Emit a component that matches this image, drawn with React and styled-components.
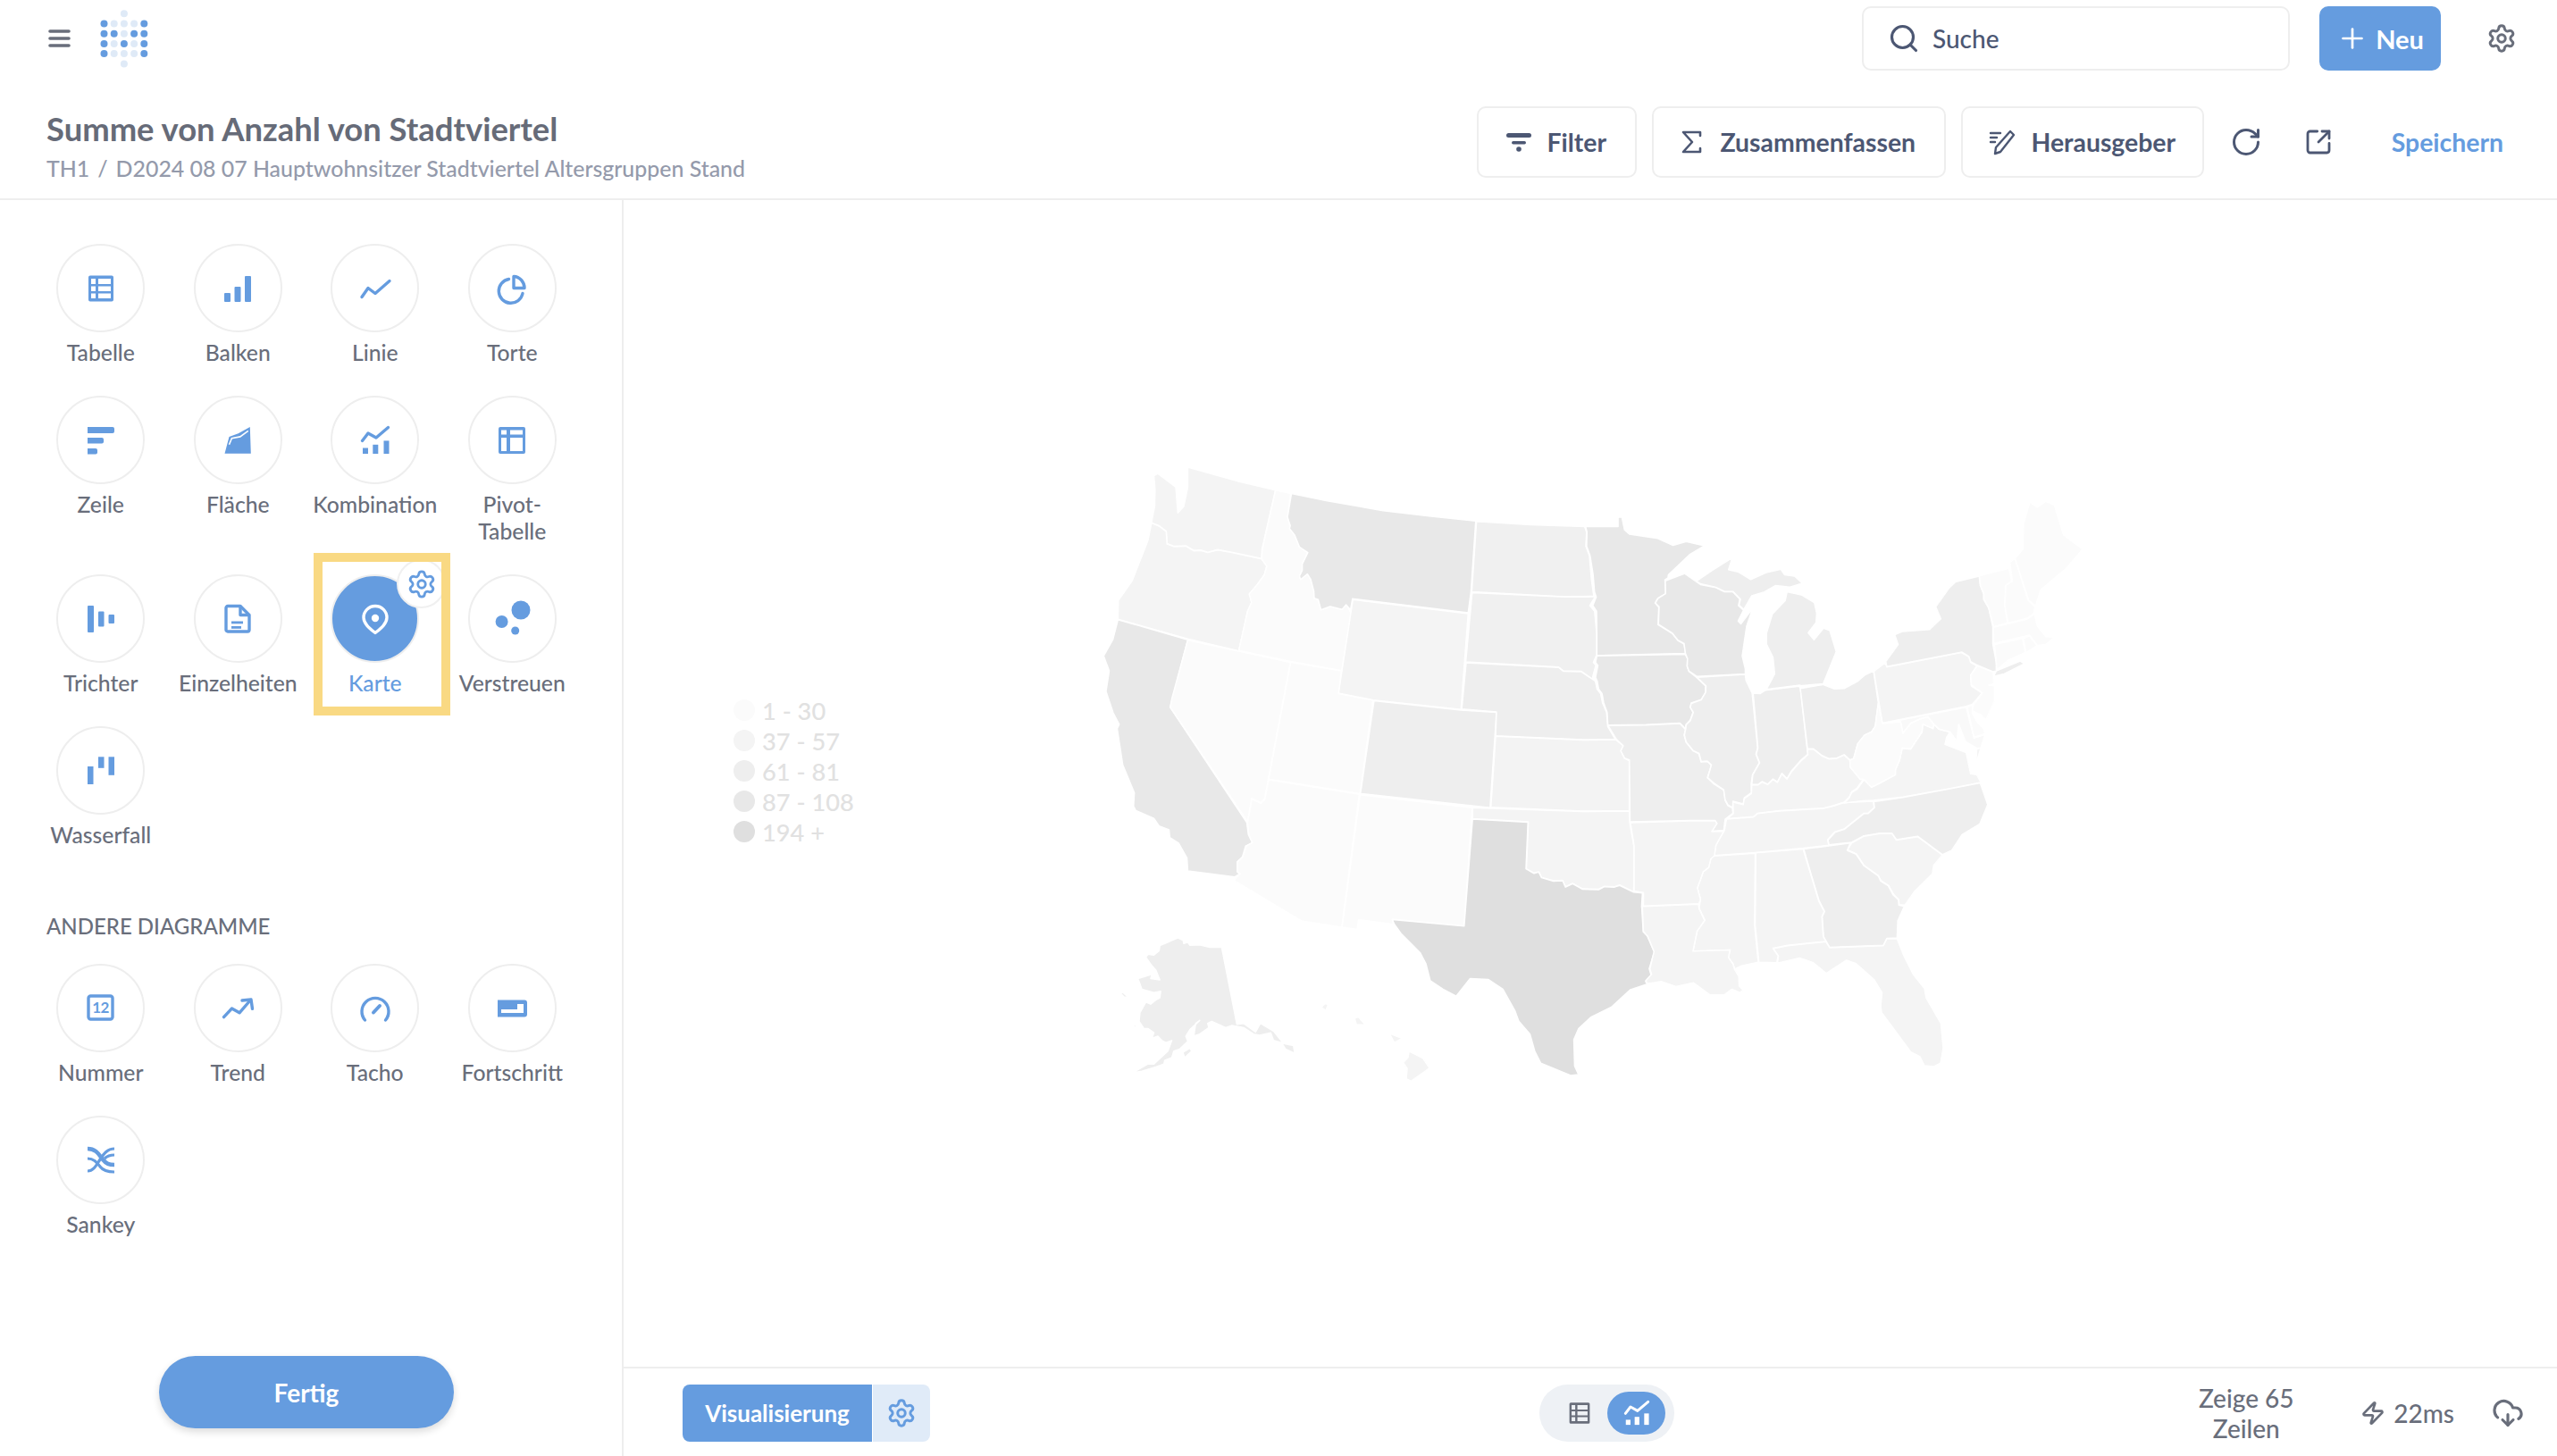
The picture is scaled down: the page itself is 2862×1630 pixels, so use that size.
import React from 'react';
import styled, { createGlobalStyle } from 'styled-components';
import { Search, Plus, Settings, RotateCw, SquareArrowOutUpRight, Zap, CloudDownload } from 'lucide-react';

const BLUE = '#659CDF';
const DARK = '#4C5773';
const LABEL = '#696E7B';

const Global = createGlobalStyle`
  html, body { margin: 0; padding: 0; background: #fff; }
  body { font-family: Lato, "Liberation Sans", sans-serif; }
  * { box-sizing: border-box; }
`;

const Page = styled.div`
  width: 2862px; height: 1630px; display: flex; flex-direction: column; overflow: hidden; background: #fff;
`;
const TopBar = styled.header`
  height: 86px; display: flex; align-items: center; padding: 0 38px 0 54px; flex: none;
`;
const Burger = styled.svg`width: 25px; height: 20px; color: ${LABEL};`;
const Logo = styled.svg`width: 54px; height: 66px; margin: 2px 0 0 33px;`;
const TopRight = styled.div`margin-left: auto; display: flex; align-items: center;`;
const SearchBox = styled.div`
  width: 479px; height: 72px; border: 2px solid #EEEEEE; border-radius: 10px; display: flex; align-items: center;
  padding-left: 27px; gap: 14px; color: ${DARK}; font-size: 28px; font-weight: 500;
`;
const NewButton = styled.button`
  width: 136px; height: 72px; margin-left: 33px; border: 0; border-radius: 10px; background: ${BLUE}; color: #fff;
  font: 700 29px Lato, sans-serif; display: flex; align-items: center; justify-content: center; gap: 8px; padding: 0;
`;
const GearHolder = styled.div`margin-left: 51px; margin-right: 7px; display: flex; color: ${LABEL};`;

const TitleBar = styled.div`
  height: 138px; flex: none; display: flex; align-items: flex-start; padding: 33px 60px 0 52px; border-bottom: 2px solid #EEEEEE;
`;
const TitleBlock = styled.div`margin-top: 2px;`;
const Title = styled.h1`margin: 0; font-size: 36.4px; line-height: 46px; font-weight: 700; color: #666B78; white-space: nowrap;`;
const Crumbs = styled.div`display: flex; gap: 9px; font-size: 24.9px; line-height: 38px; margin-top: 2px; color: #949AAB; font-weight: 500; white-space: nowrap;`;
const Actions = styled.div`margin-left: auto; display: flex; align-items: center; height: 80px;`;
const ActionButton = styled.button`
  height: 80px; margin-right: 17px; border: 2px solid #EEEEEE; border-radius: 10px; background: #fff; color: ${DARK};
  font: 700 28.4px Lato, sans-serif; display: flex; align-items: center; justify-content: center; gap: ${p => p.$gap}px;
  width: ${p => p.$w}px; padding: 0;
`;
const IconSlot = styled.div`display: flex; color: ${DARK}; margin-left: ${p => p.$ml}px;`;
const Save = styled.div`margin-left: 66px; color: ${BLUE}; font-size: 28.4px; font-weight: 700;`;

const Body = styled.div`flex: 1; display: flex; min-height: 0;`;
const Sidebar = styled.aside`
  width: 698px; flex: none; border-right: 2px solid #EEEEEE; padding: 49px 0 31px 36px; display: flex; flex-direction: column;
`;
const ChartGrid = styled.div`display: grid; grid-template-columns: repeat(4, 153.5px); row-gap: 33px;`;
const Item = styled.div`position: relative; display: flex; flex-direction: column; align-items: center;`;
const Circle = styled.div`
  width: 99px; height: 99px; border-radius: 50%; border: 2px solid #EEEEEE;
  background: ${p => (p.$active ? BLUE : '#fff')}; color: ${p => (p.$active ? '#fff' : BLUE)};
  display: flex; align-items: center; justify-content: center;
`;
const Label = styled.div`
  margin-top: 8px; font-size: 24.7px; line-height: 30px; text-align: center; white-space: pre-line;
  color: ${p => (p.$active ? BLUE : LABEL)}; font-weight: 500;
`;
const Badge = styled.div`
  position: absolute; left: 101px; top: -17px; width: 55px; height: 55px; border-radius: 50%; background: #fff;
  border: 2px solid #F0F0F0; color: ${BLUE}; display: flex; align-items: center; justify-content: center;
`;
const Highlight = styled.div`
  position: absolute; left: 8px; top: -24px; width: 153px; height: 182px; border: 10px solid #F9D983; pointer-events: none;
`;
const SectionHead = styled.div`
  margin: 72px 0 27px 16px; font-size: 24px; line-height: 30px; font-weight: 500; color: ${LABEL}; white-space: nowrap;
`;
const Done = styled.button`
  margin: auto 0 0 142px; width: 330px; height: 81px; flex: none; border: 0; border-radius: 41px; background: ${BLUE}; color: #fff;
  font: 700 28px Lato, sans-serif; box-shadow: 0 4px 8px rgba(0,0,0,.14);
`;

const Main = styled.main`flex: 1; min-width: 0; display: flex; flex-direction: column;`;
const Canvas = styled.div`flex: 1; min-height: 0; display: flex; align-items: flex-start;`;
const Legend = styled.div`margin: 554px 0 0 123px; width: 379px; flex: none; display: flex; flex-direction: column;`;
const LegendRow = styled.div`
  height: 34px; display: flex; align-items: center; gap: 8px; font-size: 27.2px; font-weight: 500; color: #E1E1E1; white-space: nowrap;
`;
const LegendDot = styled.span`width: 24px; height: 24px; border-radius: 50%; background: ${p => p.$c}; flex: none;`;
const MapSvg = styled.svg`width: 1200px; height: 750px; margin-top: 276px; flex: none; display: block;`;
const Shape = styled.polygon`fill: ${p => p.$c}; stroke: #fff; stroke-width: 1.5px; stroke-linejoin: round; vector-effect: non-scaling-stroke;`;

const BottomBar = styled.footer`
  height: 100px; flex: none; border-top: 2px solid #EEEEEE; display: flex; align-items: center; padding: 2px 37px 0 66px;
`;
const VizGroup = styled.div`display: flex; height: 64px; gap: 1px; border-radius: 8px; overflow: hidden;`;
const VizButton = styled.div`
  width: 212px; background: ${BLUE}; color: #fff; font-size: 26px; font-weight: 700; display: flex; align-items: center; justify-content: center;
`;
const VizGear = styled.div`width: 64px; background: #E0EBF8; color: ${BLUE}; display: flex; align-items: center; justify-content: center;`;
const Toggle = styled.div`
  margin-left: 682px; width: 151px; height: 64px; border-radius: 32px; background: #EEF1F5; display: flex; align-items: center; padding: 0 10px 0 32px;
  color: ${LABEL};
`;
const ToggleActive = styled.div`
  margin-left: auto; width: 65px; height: 48px; border-radius: 24px; background: ${BLUE}; color: #fff; display: flex; align-items: center; justify-content: center;
`;
const Rows = styled.div`
  margin-left: auto; width: 120px; text-align: center; font-size: 28px; line-height: 34px; font-weight: 500; color: ${LABEL};
`;
const Timing = styled.div`
  margin-left: 68px; display: flex; align-items: center; gap: 9px; font-size: 28px; font-weight: 500; color: ${LABEL};
`;
const Cloud = styled.div`margin-left: 42px; display: flex; color: ${LABEL};`;

const Ico = ({ children, s = 32 }) => (
  <svg width={s} height={s} viewBox="0 0 32 32" fill="currentColor" style={{ overflow: 'visible', display: 'block' }}>{children}</svg>
);
const line = { fill: 'none', stroke: 'currentColor', strokeWidth: 3.4, strokeLinecap: 'round', strokeLinejoin: 'round' };

const TableIcon = ({ s }) => (
  <Ico s={s}><path fillRule="evenodd" d="M4 1.500h24a2 2 0 0 1 2 2v25a2 2 0 0 1-2 2H4a2 2 0 0 1-2-2v-25a2 2 0 0 1 2-2ZM5 5v6h5V5H5Zm8 0v6h14V5H13ZM5 13.500v5.500h5v-5.500H5Zm8 0v5.500h14v-5.500H13ZM5 21.500V27h5v-5.500H5Zm8 0V27h14v-5.500H13Z" /></Ico>
);
const ComboIcon = ({ s }) => (
  <Ico s={s}>
    <polyline {...line} points="1.500,16.500 8,8 17,13 30.500,1.500" />
    <rect x="2" y="24.500" width="6" height="6.500" /><rect x="13.300" y="20.800" width="6" height="10.200" /><rect x="25.500" y="16.400" width="6" height="14.600" />
  </Ico>
);
const MapPin = () => (
  <Ico><path d="M16 1.500C8.500 1.500 3 7.500 3 14.300C3 21.500 10.500 27 16 31.500C21.500 27 29 21.500 29 14.300C29 7.500 23.500 1.500 16 1.500Z" {...line} /><circle cx="16" cy="15" r="4.200" /></Ico>
);

const icons = {
  table: <TableIcon />,
  bar: <Ico><rect x="1" y="21" width="7" height="10" rx="1" /><rect x="12.500" y="14" width="7" height="17" rx="1" /><rect x="24" y="2" width="7" height="29" rx="1" /></Ico>,
  line: <Ico><polyline {...line} points="1,25.500 8,15.500 16,21.500 32,7.500" /></Ico>,
  pie: <Ico><path {...line} d="M12.500 5.500A13.500 13.500 0 1 0 28 21.500" /><path {...line} d="M18 2.500V15.500H30A12.500 13 0 0 0 18 2.500Z" /></Ico>,
  row: <Ico><path d="M1 1h28a2 2 0 0 1 2 2v3a2 2 0 0 1-2 2H1Z" /><path d="M1 13h16a2 2 0 0 1 2 2v2.500a2 2 0 0 1-2 2H1Z" /><path d="M1 25h9a2 2 0 0 1 2 2v2.500a2 2 0 0 1-2 2H1Z" /></Ico>,
  area: <Ico><path d="M1.500 30.800L6.500 11.900L16.700 8.300L29.800 1L30.800 30.800Z" /><path d="M6.500 20.800L9.400 13.600L18.800 11.900L27.800 5.400" fill="none" stroke="#fff" strokeWidth="1.600" /></Ico>,
  combo: <ComboIcon />,
  pivot: <Ico><path fillRule="evenodd" d="M3 1h26a2 2 0 0 1 2 2v26a2 2 0 0 1-2 2H3a2 2 0 0 1-2-2V3a2 2 0 0 1 2-2Zm1 3.500V9.500h6V4.500H4Zm10 0V9.500h14V4.500H14ZM4 13v15h6V13H4Zm10 0v15h14V13H14Z" /></Ico>,
  funnel: <Ico><rect x="1" y="1" width="7" height="30" rx="1" /><rect x="13" y="7.500" width="6.500" height="17" rx="1" /><rect x="24.500" y="11" width="6.500" height="10" rx="1" /></Ico>,
  detail: <Ico><path {...line} d="M5 1.500H19L29 11.500V28a2 2 0 0 1-2 2H5a2 2 0 0 1-2-2V3.500a2 2 0 0 1 2-2Z" /><path {...line} d="M19 2V11.500H28.500" /><rect x="9" y="18.500" width="13" height="2.800" /><rect x="9" y="24" width="11" height="2.800" /></Ico>,
  map: <MapPin />,
  scatter: <Ico><circle cx="26" cy="6" r="10.500" /><circle cx="4.600" cy="19" r="7" /><circle cx="19.700" cy="29" r="4.500" /></Ico>,
  waterfall: <Ico><rect x="1" y="11" width="6.500" height="20" /><rect x="13" y="0.300" width="6.500" height="12.500" /><rect x="24.500" y="0.300" width="6.500" height="20.500" /></Ico>,
  number: <Ico><rect {...line} x="2" y="2" width="27" height="26" rx="2.500" /><text x="15.500" y="21" fontFamily="Lato, sans-serif" fontSize="17" fontWeight="700" textAnchor="middle" letterSpacing="-0.500">12</text></Ico>,
  trend: <Ico><polyline {...line} points="0.500,25.600 9.500,16 18,20.800 30,7" /><polyline {...line} points="21,7 31,6 32.500,16.400" /></Ico>,
  gauge: <Ico><path {...line} d="M4.500 29A15 15 0 1 1 27.500 29" /><path {...line} strokeWidth="4" d="M14 20.500L21 13" /></Ico>,
  progress: <Ico><path fillRule="evenodd" d="M0 6.500h30a3 3 0 0 1 3 3v13a3 3 0 0 1-3 3H0ZM4 11v10h25V11H4Z" /><rect x="4" y="11" width="18" height="6" /></Ico>,
  sankey: <Ico><path d="M1 3C11 3 14 10 18 15C22 20 25 21 31 21" fill="none" stroke="currentColor" strokeWidth="4.500" /><path d="M31 3C23 3 19 9 15 15C11 21 8 28 1 28" fill="none" stroke="currentColor" strokeWidth="3.200" /><path d="M1 14C8 14 11 18 15 23C18 27 24 29 31 29" fill="none" stroke="currentColor" strokeWidth="3.200" /><path d="M31 10C26 10 22 12 20 14" fill="none" stroke="currentColor" strokeWidth="3.200" /></Ico>,
};

const mainCharts = [
  ['table', 'Tabelle'], ['bar', 'Balken'], ['line', 'Linie'], ['pie', 'Torte'],
  ['row', 'Zeile'], ['area', 'Fläche'], ['combo', 'Kombination'], ['pivot', 'Pivot-\nTabelle'],
  ['funnel', 'Trichter'], ['detail', 'Einzelheiten'], ['map', 'Karte'], ['scatter', 'Verstreuen'],
  ['waterfall', 'Wasserfall'],
];
const otherCharts = [['number', 'Nummer'], ['trend', 'Trend'], ['gauge', 'Tacho'], ['progress', 'Fortschritt'], ['sankey', 'Sankey']];

const ChartItem = ({ id, label }) => {
  const active = id === 'map';
  return (
    <Item>
      <Circle $active={active}>{icons[id]}</Circle>
      <Label $active={active}>{label}</Label>
      {active && <Badge><Settings size={34} strokeWidth={2} /></Badge>}
      {active && <Highlight />}
    </Item>
  );
};

const L0 = '#FBFBFB', L1 = '#F4F4F4', L2 = '#EEEEEE', L3 = '#E8E8E8', L4 = '#DFDFDF';

const west = [
  [L1, '205,68 215,63 260,95 265,155 280,140 290,95 290,48 420,82 510,102 476,240 475,262 400,247 365,241 340,247 322,242 305,243 285,232 255,233 238,227 236,198 218,185 199,178 207,140 208,100'],
  [L1, '199,179 218,186 236,199 238,228 255,234 285,233 305,244 322,243 340,248 365,242 400,248 475,263 488,280 482,300 465,322 445,345 450,365 440,385 418,478 290,450 115,404 116,360 150,315 190,220'],
  [L3, '115,405 290,452 246,610 438,880 442,908 452,927 435,935 427,960 414,972 414,995 420,1000 408,1007 290,993 288,963 267,928 245,915 243,897 218,888 205,870 160,852 154,842 156,810 127,745 113,660 118,650 103,623 85,573 93,525 79,490 102,452'],
  [L0, '510,102 548,110 540,165 547,185 545,192 558,207 570,235 591,248 577,275 577,290 570,303 573,311 590,298 598,310 606,338 607,355 617,358 624,382 647,374 677,381 687,370 695,382 700,391 676,524 548,503 418,477 440,385 450,365 444,345 465,322 482,300 488,280 475,262 477,240'],
  [L3, '550,110 640,127 780,150 900,163 1012,174 1000,340 993,389 703,356 698,382 687,370 677,381 647,374 624,382 617,358 607,355 606,338 598,310 590,298 573,311 570,303 577,290 577,275 591,248 570,235 558,207 545,192 547,185 540,165'],
  [L1, '704,358 993,391 975,615 755,593 668,577'],
  [L0, '548,505 675,525 668,578 754,594 722,812 493,778'],
  [L0, '290,453 418,479 547,505 492,778 482,825 473,833 450,823 440,878 246,610 250,590'],
  [L2, '757,595 975,617 1064,622 1048,845 723,812'],
  [L0, '493,780 720,814 676,1125 575,1110 405,1015 422,1000 415,995 415,972 428,960 437,935 452,927 443,908 440,880 451,825 473,835 483,827'],
  [L0, '722,815 1003,845 983,1122 803,1106 805,1118 718,1107 715,1130 677,1125'],
  ['#F0F0F0', '1014,175 1150,183 1285,187 1290,200 1288,233 1297,255 1302,310 1308,350 1235,351 1002,340'],
  ['#F0F0F0', '1003,342 1235,352 1309,351 1311,352 1298,372 1310,385 1315,435 1315,488 1307,505 1313,512 1305,540 1310,548 1277,526 1232,525 1220,516 987,504'],
  [L2, '988,506 1220,517 1232,526 1277,527 1312,549 1316,567 1325,578 1330,600 1340,622 1343,655 1362,685 1280,686 1062,677 1064,621 977,614'],
  ['#F3F3F3', '1062,678 1280,687 1363,686 1382,700 1376,712 1385,730 1397,735 1397,852 1280,853 1050,844'],
  [L1, '1004,845 1280,854 1397,853 1398,880 1409,938 1408,1042 1373,1026 1360,1030 1335,1029 1320,1036 1280,1035 1255,1022 1237,1030 1230,1015 1207,1016 1177,1008 1170,995 1158,998 1139,988 1144,878 1004,871'],
  [L4, '1004,872 1143,879 1138,988 1158,999 1170,996 1177,1009 1207,1017 1230,1016 1237,1031 1255,1023 1280,1036 1320,1037 1335,1030 1360,1031 1373,1027 1408,1043 1430,1045 1428,1075 1432,1135 1442,1145 1460,1182 1447,1222 1452,1238 1438,1252 1442,1258 1400,1271 1352,1312 1300,1336 1270,1362 1258,1388 1260,1450 1270,1470 1250,1472 1175,1443 1160,1415 1148,1375 1120,1345 1110,1320 1080,1270 1043,1247 998,1245 963,1286 930,1270 898,1250 887,1210 873,1185 825,1140 808,1118 803,1107 983,1122'],
  [L2, '185,1195 190,1188 205,1190 218,1180 220,1168 235,1162 250,1156 265,1150 278,1155 280,1163 290,1160 295,1167 320,1166 345,1172 375,1172 413,1352 430,1350 460,1370 472,1350 505,1368 530,1397 555,1402 558,1420 535,1410 525,1395 505,1390 498,1372 470,1378 455,1375 430,1360 400,1355 385,1360 350,1345 340,1350 343,1360 320,1375 305,1380 310,1350 320,1343 295,1365 285,1380 290,1392 270,1410 255,1415 250,1430 232,1437 230,1445 210,1452 175,1462 153,1465 190,1445 205,1445 240,1415 250,1390 235,1395 225,1390 215,1380 200,1385 205,1372 190,1362 180,1362 168,1345 170,1325 185,1300 197,1305 210,1295 220,1290 222,1275 205,1278 175,1270 165,1245 200,1235 197,1245 220,1248 210,1225 200,1215'],
  [L2, '120,1278 128,1278 142,1290 130,1288'],
  [L2, '148,1352 162,1355 158,1360'],
  [L2, '278,1418 295,1408 300,1415 282,1430'],
  [L1, '625,1312 635,1303 642,1307 636,1320'],
  [L1, '708,1338 718,1335 735,1353 713,1353'],
  [L1, '795,1373 828,1385 808,1395'],
  [L1, '845,1415 880,1432 896,1455 850,1485 838,1480 840,1455 830,1442 842,1430'],
];

const east = [
  [L3, '-66,187 29,187 29,165 40,165 48,195 62,205 145,215 190,231 228,222 282,232 238,253 176,300 175,307 166,312 168,344 145,355 137,366 148,376 146,417 187,437 204,454 222,462 226,484 0,488 -33,489 -33,437 -34,385 -45,372 -35,352 -40,340 -44,300 -53,255 -63,233 -62,200'],
  [L3, '-33,490 225,486 232,496 231,515 236,526 258,540 285,560 285,575 272,592 243,600 240,610 248,622 240,640 228,650 226,660 210,647 110,651 0,652 -1,650 -3,622 -13,600 -18,578 -28,567 -32,549 -37,540 -30,512 -37,505'],
  [L2, '0,653 110,652 210,648 226,662 222,675 228,692 248,712 265,719 272,738 290,737 302,746 290,775 310,790 338,804 342,828 350,840 363,846 365,858 342,872 338,898 304,900 318,882 313,875 240,875 64,878 62,733 48,729 37,712 44,700 24,685'],
  [L3, '167,314 224,297 270,323 315,330 340,340 365,340 385,357 381,372 396,383 380,408 388,415 423,378 405,420 392,490 401,520 401,532 260,538 236,525 231,514 232,496 226,484 222,461 204,453 187,436 147,416 149,375 138,366 146,355 168,344'],
  [L2, '258,315 300,292 363,260 352,288 382,294 417,311 462,295 505,287 516,300 545,303 568,320 530,329 490,325 457,340 420,349 397,381 383,371 387,357 365,339 341,339 315,329 270,321'],
  [L2, '463,568 487,532 482,493 463,462 463,437 480,392 518,360 523,340 565,347 603,365 610,390 608,412 585,436 602,452 630,425 648,430 667,480 629,555 562,560 561,558'],
  [L2, '260,540 401,533 403,547 421,577 437,705 432,720 442,740 422,768 418,790 419,810 398,822 395,836 365,830 364,845 350,838 342,826 338,803 310,788 291,775 302,745 290,736 272,737 266,718 248,711 228,691 223,675 227,660 228,651 240,642 249,622 240,610 243,601 272,593 285,575 286,560'],
  [L2, '424,577 445,578 460,570 558,561 562,565 582,708 584,720 565,733 535,760 523,777 508,765 495,785 482,778 467,790 450,784 438,791 420,791 423,768 443,740 433,720 438,705'],
  [L2, '562,566 628,557 662,567 690,566 728,550 750,535 776,525 790,600 781,655 770,668 750,675 730,695 718,730 707,733 690,721 668,729 645,730 625,723 600,707 583,707'],
  [L1, '365,832 395,838 398,824 419,812 420,792 438,792 450,785 467,791 482,779 495,786 508,766 523,778 536,761 566,734 584,721 583,708 600,708 625,724 645,731 668,730 690,722 707,734 708,750 737,779 745,780 727,800 712,808 705,820 690,832 660,840 630,846 500,852 437,858 425,866 347,871 366,859'],
  [L1, '346,872 425,867 437,859 500,853 630,847 660,841 690,833 775,830 778,845 760,858 748,858 690,895 662,902 642,920 645,933 570,940 430,950 310,957 315,933 340,898'],
  [L1, '690,834 745,829 775,828 862,820 1000,800 1090,786 1078,768 1060,766 1047,716 985,697 990,680 1000,668 968,662 953,650 950,660 920,650 918,668 885,708 860,706 852,735 840,757 840,768 795,788 770,797 748,780 728,802 712,810 705,822'],
  [L2, '777,831 862,821 1000,801 1088,787 1110,838 1087,883 1035,908 1005,945 978,955 905,912 843,920 830,905 795,905 748,911 712,926 646,932 643,921 663,903 690,896 748,859 760,859 779,845'],
  [L1, '712,928 748,912 795,906 830,906 843,921 905,913 977,956 952,980 948,1000 895,1042 868,1073 851,1072 850,1060 835,1048 820,1027 798,1016 790,1004 748,980 726,953 700,944'],
  [L2, '572,942 708,928 699,945 725,954 748,981 790,1005 797,1017 819,1028 833,1049 849,1061 850,1073 866,1076 847,1110 845,1150 815,1151 805,1167 648,1172 630,1147 626,1100 633,1088 617,1063 595,1005'],
  [L1, '432,951 570,942 594,1005 616,1064 632,1088 625,1100 629,1147 637,1158 525,1167 482,1174 497,1192 493,1208 441,1207 430,1120'],
  [L1, '483,1175 525,1168 637,1159 648,1173 805,1168 815,1152 845,1152 865,1192 892,1235 925,1268 930,1290 973,1350 980,1408 972,1443 953,1451 925,1449 912,1428 885,1417 800,1325 797,1310 801,1278 778,1248 725,1210 697,1202 638,1233 600,1208 560,1197 495,1209 498,1192'],
  [L1, '310,958 430,952 428,1120 439,1207 390,1215 370,1223 365,1210 351,1196 357,1178 248,1182 260,1135 283,1108 266,1080 270,1060 261,1033 278,995 294,985 300,965'],
  [L1, '103,1076 264,1071 266,1082 282,1109 260,1134 248,1181 356,1178 352,1196 365,1211 370,1224 382,1240 383,1262 395,1272 385,1278 362,1270 340,1283 297,1283 250,1255 198,1264 155,1252 115,1257 110,1250 127,1235 122,1222 134,1182 115,1145 103,1135 100,1076'],
  [L1, '65,880 240,876 313,876 318,882 303,901 338,900 315,933 311,957 300,965 294,985 278,995 261,1033 270,1060 265,1070 103,1075 103,1044 76,1040 76,935'],
  [L1, '777,526 810,506 815,516 1033,482 1055,492 1060,505 1078,513 1060,535 1062,560 1093,577 1065,603 1047,608 802,647'],
  [L2, '815,515 812,503 848,463 838,440 860,433 940,428 973,403 958,375 998,330 1015,317 1085,303 1088,325 1098,345 1098,358 1113,378 1125,422 1125,462 1135,505 1135,525 1125,527 1078,511 1060,503 1055,491 1035,481'],
  [L2, '1135,525 1205,502 1218,508 1158,532 1127,538'],
  [L0, '1086,302 1172,285 1180,315 1162,325 1160,372 1168,413 1127,421 1113,377 1099,357 1099,345 1089,325'],
  [L0, '1175,270 1190,262 1228,360 1248,375 1245,390 1225,402 1170,413 1160,372 1163,325 1182,315'],
  [L0, '1190,262 1213,240 1215,180 1233,130 1255,142 1280,128 1305,137 1332,207 1388,240 1340,285 1265,335 1250,373 1230,360'],
  [L0, '1127,423 1225,404 1247,392 1255,420 1280,445 1305,447 1280,463 1255,465 1232,441 1128,461'],
  [L0, '1130,463 1212,449 1220,482 1170,500 1137,522 1135,505'],
  [L0, '1214,449 1232,443 1254,466 1222,482'],
  [L0, '1080,513 1126,528 1128,555 1113,558 1130,560 1130,595 1105,640 1090,628 1065,618 1068,605 1095,576 1062,558 1060,535'],
  [L0, '1050,610 1065,605 1065,625 1080,645 1098,660 1102,672 1070,680'],
  ['#F9F9F9', '802,648 1047,610 1070,682 1102,674 1090,705 1078,706 1045,690 1025,650 1020,690 1000,668 968,661 953,650 935,632 915,636 885,647 862,670 855,643'],
  [L1, '1078,708 1090,705 1075,745'],
  [L0, '790,600 802,648 855,644 862,671 885,648 915,637 935,633 952,650 950,660 920,649 918,667 885,707 860,705 852,734 840,757 840,768 795,787 770,797 748,779 737,778 708,750 707,734 718,730 730,695 750,675 770,668 781,655'],
];

const legend = [['#FBFBFB', '1 - 30'], ['#F4F4F4', '37 - 57'], ['#EEEEEE', '61 - 81'], ['#E8E8E8', '87 - 108'], ['#DFDFDF', '194 +']];

const logoB = [[0,0],[4,0],[0,1],[1,1],[3,1],[4,1],[0,2],[2,2],[4,2],[0,3],[4,3]];
const logoAll = [];
for (let r = 0; r < 4; r++) for (let c = 0; c < 5; c++) logoAll.push([c, r]);

export default function App() {
  return (
    <Page>
      <Global />
      <TopBar>
        <Burger viewBox="0 0 25 20"><g stroke="currentColor" strokeWidth="3.600" strokeLinecap="round"><line x1="2" y1="2" x2="23" y2="2" /><line x1="2" y1="10" x2="23" y2="10" /><line x1="2" y1="18" x2="23" y2="18" /></g></Burger>
        <Logo viewBox="0 0 54 66">
          {logoAll.map(([c, r]) => {
            const on = logoB.some(([a, b]) => a === c && b === r);
            return <circle key={c + '-' + r} cx={4.5 + c * 11.2} cy={15.500 + r * 11.2} r="4" fill={on ? BLUE : '#DFEAF7'} />;
          })}
          <circle cx="26.900" cy="4.300" r="4" fill="#DFEAF7" />
          <circle cx="26.900" cy="60.500" r="4" fill="#DFEAF7" />
        </Logo>
        <TopRight>
          <SearchBox><Search size={36} strokeWidth={2.1} />Suche</SearchBox>
          <NewButton><Plus size={36} strokeWidth={1.8} />Neu</NewButton>
          <GearHolder><Settings size={34} strokeWidth={2.1} /></GearHolder>
        </TopRight>
      </TopBar>
      <TitleBar>
        <TitleBlock>
          <Title>Summe von Anzahl von Stadtviertel</Title>
          <Crumbs><span>TH1</span><span>/</span><span>D2024 08 07 Hauptwohnsitzer Stadtviertel Altersgruppen Stand</span></Crumbs>
        </TitleBlock>
        <Actions>
          <ActionButton $w={179} $gap={17}>
            <svg width="28" height="24" viewBox="0 0 28 24" fill={DARK}><rect x="0" y="2" width="28" height="5" rx="2.500" /><rect x="6" y="11" width="16" height="3.500" rx="1.700" /><circle cx="14" cy="20" r="2.800" /></svg>
            Filter
          </ActionButton>
          <ActionButton $w={329} $gap={20}>
            <svg width="23" height="26" viewBox="0 0 23 26" fill="none" stroke={DARK} strokeWidth="2.600" strokeLinejoin="round" strokeLinecap="round"><path d="M21 6V2H2L12 13L2 24H21V20" /></svg>
            Zusammenfassen
          </ActionButton>
          <ActionButton $w={272} $gap={17}>
            <svg width="30" height="30" viewBox="0 0 30 30" fill="none" stroke={DARK} strokeWidth="2.400" strokeLinejoin="round" strokeLinecap="round"><path d="M2 5H13M2 10H9M2 15H7" /><path d="M24 3L28 7L13 26L7 28L8 21Z" /></svg>
            Herausgeber
          </ActionButton>
          <IconSlot $ml={12}><RotateCw size={36} strokeWidth={2} /></IconSlot>
          <IconSlot $ml={47}><SquareArrowOutUpRight size={32} strokeWidth={2.1} /></IconSlot>
          <Save>Speichern</Save>
        </Actions>
      </TitleBar>
      <Body>
        <Sidebar>
          <ChartGrid>{mainCharts.map(([id, l]) => <ChartItem key={id} id={id} label={l} />)}</ChartGrid>
          <SectionHead>ANDERE DIAGRAMME</SectionHead>
          <ChartGrid>{otherCharts.map(([id, l]) => <ChartItem key={id} id={id} label={l} />)}</ChartGrid>
          <Done>Fertig</Done>
        </Sidebar>
        <Main>
          <Canvas>
            <Legend>
              {legend.map(([c, t]) => <LegendRow key={t}><LegendDot $c={c} />{t}</LegendRow>)}
            </Legend>
            <MapSvg viewBox="1200 500 1200 750">
              <g transform="translate(1200 500) scale(0.4464 0.4783)">
                {west.map(([c, p]) => <Shape key={p} $c={c} points={p} />)}
              </g>
              <g transform="translate(1800 500) scale(0.3827 0.4783)">
                {east.map(([c, p]) => <Shape key={p} $c={c} points={p} />)}
              </g>
            </MapSvg>
          </Canvas>
          <BottomBar>
            <VizGroup>
              <VizButton>Visualisierung</VizButton>
              <VizGear><Settings size={34} strokeWidth={2.1} /></VizGear>
            </VizGroup>
            <Toggle>
              <TableIcon s={26} />
              <ToggleActive><ComboIcon s={28} /></ToggleActive>
            </Toggle>
            <Rows>Zeige 65 Zeilen</Rows>
            <Timing><Zap size={28} strokeWidth={2.300} />22ms</Timing>
            <Cloud><CloudDownload size={36} strokeWidth={2.100} /></Cloud>
          </BottomBar>
        </Main>
      </Body>
    </Page>
  );
}
